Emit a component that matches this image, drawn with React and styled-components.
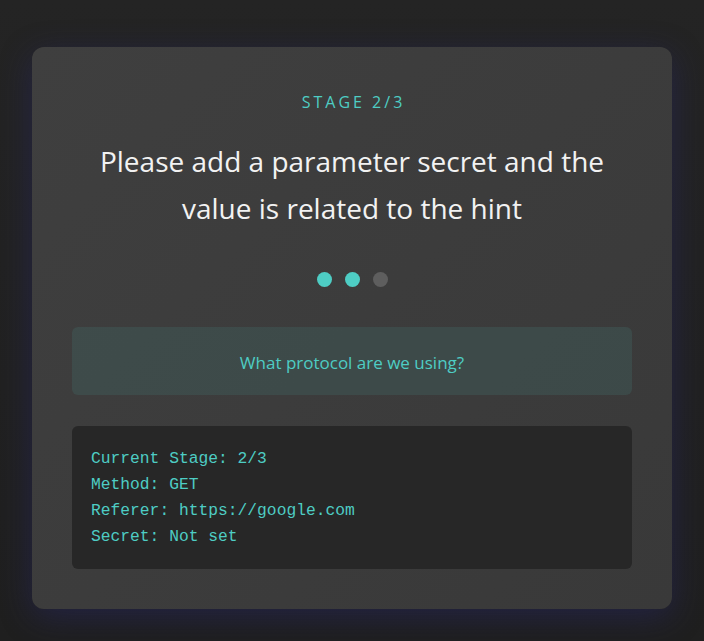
import React from 'react';
import styled, { createGlobalStyle } from 'styled-components';

const GlobalStyle = createGlobalStyle`
  html, body {
    margin: 0;
    padding: 0;
    background: #232323;
  }
  * {
    box-sizing: border-box;
  }
`;

const stage = 2;
const totalStages = 3;

const info = [
  `Current Stage: ${stage}/${totalStages}`,
  'Method: GET',
  'Referer: https://google.com',
  'Secret: Not set',
];

const App = () => {
  return (
    <Page>
      <GlobalStyle />
      <Card>
        <StageLabel>
          STAGE {stage}/{totalStages}
        </StageLabel>
        <Title>Please add a parameter secret and the value is related to the hint</Title>
        <Dots>
          {Array.from({ length: totalStages }).map((_, i) => (
            <Dot key={i} $active={i < stage} />
          ))}
        </Dots>
        <Hint>What protocol are we using?</Hint>
        <InfoBox>
          {info.map((line) => (
            <InfoLine key={line}>{line}</InfoLine>
          ))}
        </InfoBox>
      </Card>
    </Page>
  );
};

export default App;

const Page = styled.div`
  min-height: 100vh;
  display: flex;
  justify-content: center;
  align-items: flex-start;
  padding: 47px 32px 32px;
  background: linear-gradient(180deg, #242424 0%, #1f1f1f 100%);
  font-family: 'Open Sans', 'Noto Sans', sans-serif;
`;

const Card = styled.div`
  width: 640px;
  padding: 40px;
  border-radius: 12px;
  background: linear-gradient(135deg, #3f3f3f 0%, #393939 100%);
  box-shadow: 0 8px 32px rgba(40, 40, 110, 0.45);
  display: flex;
  flex-direction: column;
  align-items: stretch;
`;

const StageLabel = styled.div`
  margin-top: 5px;
  padding-left: 3px;
  text-align: center;
  color: #4ecdc4;
  font-size: 16px;
  letter-spacing: 3px;
  line-height: 20px;
`;

const Title = styled.h1`
  margin: 26px 0 0;
  text-align: center;
  color: #f2f2f2;
  font-size: 28px;
  font-weight: 400;
  line-height: 47px;
`;

const Dots = styled.div`
  margin-top: 40px;
  display: flex;
  justify-content: center;
  gap: 13px;
`;

const Dot = styled.span`
  width: 15px;
  height: 15px;
  border-radius: 50%;
  background: ${(p) => (p.$active ? '#4ecdc4' : '#5e5e5e')};
`;

const Hint = styled.div`
  margin-top: 40px;
  height: 68px;
  padding-top: 2px;
  display: flex;
  align-items: center;
  justify-content: center;
  border-radius: 6px;
  background: rgba(78, 205, 196, 0.1);
  color: #4ecdc4;
  font-size: 17px;
`;

const InfoBox = styled.div`
  margin-top: 31px;
  padding: 20px 19px 19px;
  border-radius: 6px;
  background: #272727;
  color: #4ecdc4;
  font-family: 'Courier New', 'Nimbus Mono PS', 'FreeMono', 'Liberation Mono', monospace;
  font-size: 16.3px;
`;

const InfoLine = styled.div`
  line-height: 26px;
`;
